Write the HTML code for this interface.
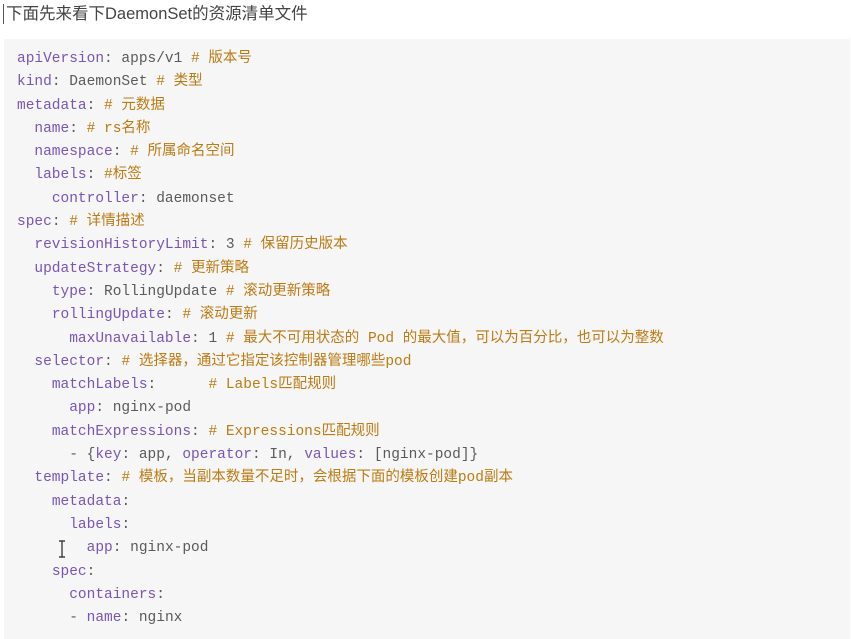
<!DOCTYPE html>
<html><head><meta charset="utf-8"><style>
html,body{margin:0;padding:0;background:#fff;width:851px;height:630px;overflow:hidden}
.t{position:absolute;left:3px;top:4px;font:16.5px "Liberation Sans","Noto Sans CJK SC",sans-serif;color:#444;padding-left:2px;border-left:1px solid #555;line-height:20px}
.b{position:absolute;left:4px;top:39px;width:846px;height:600px;background:#f6f6f6}
pre{position:absolute;left:17px;top:48px;margin:0;font:14.5px "Liberation Mono","Noto Sans CJK SC",monospace;line-height:23.3px;color:#5a5a5a}
.k{color:#7a55b4}.c{color:#bd7b14}
</style></head><body>
<div class="t">下面先来看下DaemonSet的资源清单文件</div>
<div class="b"></div>
<pre><span class="k">apiVersion</span>: apps/v1 <span class="c"># 版本号</span>
<span class="k">kind</span>: DaemonSet <span class="c"># 类型</span>
<span class="k">metadata</span>: <span class="c"># 元数据</span>
  <span class="k">name</span>: <span class="c"># rs名称</span>
  <span class="k">namespace</span>: <span class="c"># 所属命名空间</span>
  <span class="k">labels</span>: <span class="c">#标签</span>
    <span class="k">controller</span>: daemonset
<span class="k">spec</span>: <span class="c"># 详情描述</span>
  <span class="k">revisionHistoryLimit</span>: 3 <span class="c"># 保留历史版本</span>
  <span class="k">updateStrategy</span>: <span class="c"># 更新策略</span>
    <span class="k">type</span>: RollingUpdate <span class="c"># 滚动更新策略</span>
    <span class="k">rollingUpdate</span>: <span class="c"># 滚动更新</span>
      <span class="k">maxUnavailable</span>: 1 <span class="c"># 最大不可用状态的 Pod 的最大值，可以为百分比，也可以为整数</span>
  <span class="k">selector</span>: <span class="c"># 选择器，通过它指定该控制器管理哪些pod</span>
    <span class="k">matchLabels</span>:      <span class="c"># Labels匹配规则</span>
      <span class="k">app</span>: nginx-pod
    <span class="k">matchExpressions</span>: <span class="c"># Expressions匹配规则</span>
      - {<span class="k">key</span>: app, <span class="k">operator</span>: In, <span class="k">values</span>: [nginx-pod]}
  <span class="k">template</span>: <span class="c"># 模板，当副本数量不足时，会根据下面的模板创建pod副本</span>
    <span class="k">metadata</span>:
      <span class="k">labels</span>:
        <span class="k">app</span>: nginx-pod
    <span class="k">spec</span>:
      <span class="k">containers</span>:
      - <span class="k">name</span>: nginx</pre>
<svg style="position:absolute;left:58px;top:540px" width="8" height="18"><path d="M1 1h6M4 1v16M1 17h6" stroke="#222" stroke-width="1.2" fill="none"/></svg>
</body></html>
